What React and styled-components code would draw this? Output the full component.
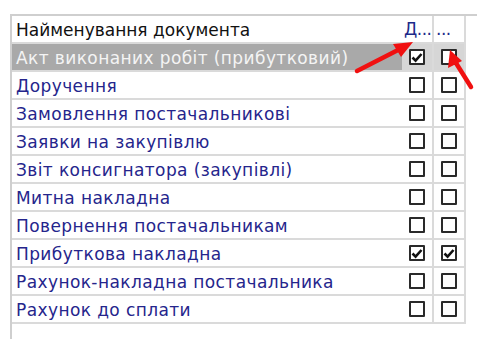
import React from 'react';
import styled, { createGlobalStyle } from 'styled-components';

const GlobalStyle = createGlobalStyle`
  body {
    margin: 0;
    background: #fff;
    font-family: 'DejaVu Sans', Verdana, sans-serif;
  }
`;

const docs = [
  { name: 'Акт виконаних робіт (прибутковий)', a: true, b: false, selected: true },
  { name: 'Доручення', a: false, b: false },
  { name: 'Замовлення постачальникові', a: false, b: false },
  { name: 'Заявки на закупівлю', a: false, b: false },
  { name: 'Звіт консигнатора (закупівлі)', a: false, b: false },
  { name: 'Митна накладна', a: false, b: false },
  { name: 'Повернення постачальникам', a: false, b: false },
  { name: 'Прибуткова накладна', a: true, b: true },
  { name: 'Рахунок-накладна постачальника', a: false, b: false },
  { name: 'Рахунок до сплати', a: false, b: false },
];

const Page = styled.div`
  position: relative;
  width: 477px;
  height: 339px;
  overflow: hidden;
`;

const Frame = styled.div`
  margin: 14px 0 0 10px;
  height: 400px;
  border-top: 2px solid #cfcfcf;
  border-left: 2px solid #cfcfcf;
`;

const Grid = styled.div`
  width: 454px;
  display: grid;
  grid-template-columns: 1fr 32px 32px;
  grid-auto-rows: 28px;
`;

const Cell = styled.div`
  display: flex;
  align-items: center;
  border-bottom: 2px solid #dadada;
  border-right: ${(p) => (p.last || p.check ? '2px solid #dadada' : 'none')};
  padding: ${(p) => (p.check ? '0' : '1px 0 0 4px')};
  justify-content: ${(p) => (p.check ? 'center' : 'flex-start')};
  background: ${(p) => (p.selected ? (p.check ? '#d6d6d6' : '#a9a9a9') : 'transparent')};
  color: ${(p) => (p.selected ? '#f4f4f4' : '#25258c')};
  font-size: 17px;
  letter-spacing: 0.4px;
  white-space: nowrap;
  overflow: hidden;
`;

const HeadCell = styled(Cell)`
  color: ${(p) => (p.blue ? '#1d2a8a' : '#111')};
  padding-left: ${(p) => (p.check ? '2px' : '4px')};
  justify-content: flex-start;
  letter-spacing: ${(p) => (p.check ? '-0.5px' : '0')};
`;

const Box = styled.span`
  width: 12px;
  height: 12px;
  border: 2px solid #2a2a2a;
  border-radius: 1px;
  background: #fff;
  display: flex;
  align-items: center;
  justify-content: center;
  box-sizing: content-box;
`;

const Overlay = styled.svg`
  position: absolute;
  left: 0;
  top: 0;
  pointer-events: none;
`;

const CheckBox = ({ checked }) => (
  <Box>
    {checked && (
      <svg width="12" height="11" viewBox="0 0 12 11">
        <path d="M1.5 5.5 L4.6 8.6 L10.5 2" fill="none" stroke="#111" strokeWidth="2.6" />
      </svg>
    )}
  </Box>
);

export default function App() {
  return (
    <Page>
      <GlobalStyle />
      <Frame>
        <Grid>
          <HeadCell>Найменування документа</HeadCell>
          <HeadCell check blue>Д...</HeadCell>
          <HeadCell check blue last>...</HeadCell>
          {docs.map((d) => (
            <React.Fragment key={d.name}>
              <Cell selected={d.selected}>{d.name}</Cell>
              <Cell check selected={d.selected}>
                <CheckBox checked={d.a} />
              </Cell>
              <Cell check selected={d.selected}>
                <CheckBox checked={d.b} />
              </Cell>
            </React.Fragment>
          ))}
        </Grid>
      </Frame>
      <Overlay width="477" height="339">
        <path d="M357 71 L400 49" stroke="#f01010" strokeWidth="4.5" strokeLinecap="round" />
        <polygon points="413,42 393,44 401,57" fill="#f01010" />
        <path d="M471 87 L456 63" stroke="#f01010" strokeWidth="4.5" strokeLinecap="round" />
        <polygon points="450,50 448,68 462,61" fill="#f01010" />
      </Overlay>
    </Page>
  );
}
